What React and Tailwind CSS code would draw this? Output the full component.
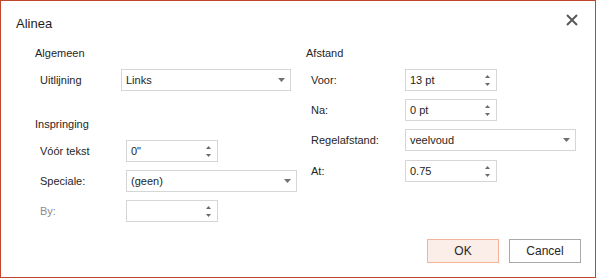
import React from 'react';

const font = { fontFamily: '"Liberation Sans", Arial, sans-serif' };

const Caret = () => (
  <svg width="7" height="4" viewBox="0 0 7 4" className="shrink-0">
    <path d="M0 0h7L3.5 4z" fill="#707070" />
  </svg>
);

const Spinner = () => (
  <div className="flex flex-col items-center gap-[5px] mr-[6px]">
    <svg width="5" height="3" viewBox="0 0 5 3">
      <path d="M2.5 0L5 3H0z" fill="#6a6a6a" />
    </svg>
    <svg width="5" height="3" viewBox="0 0 5 3">
      <path d="M0 0h5L2.5 3z" fill="#6a6a6a" />
    </svg>
  </div>
);

const SelectBox = ({ value, width }) => (
  <div className={`${width} h-[22px] border border-[#d6d6d6] bg-white flex items-center justify-between pl-[4px] pr-[5px] text-[11px] text-[#1e1e1e]`}>
    <span>{value}</span>
    <Caret />
  </div>
);

const SpinBox = ({ value }) => (
  <div className="w-[92px] h-[22px] border border-[#d6d6d6] bg-white flex items-center justify-between pl-[4px] text-[11px] text-[#1e1e1e]">
    <span>{value}</span>
    <Spinner />
  </div>
);

const Row = ({ label, labelWidth, disabled, children, className = '' }) => (
  <div className={`flex items-center pl-[5px] ${className}`}>
    <span className={`${labelWidth} text-[11px] ${disabled ? 'text-[#8c8c8c]' : 'text-[#262626]'}`}>{label}</span>
    {children}
  </div>
);

const Heading = ({ children, className = '' }) => (
  <div className={`h-[20px] flex items-center text-[11px] text-[#262626] ${className}`}>{children}</div>
);

export default function App() {
  return (
    <div style={font} className="w-[596px] h-[278px] border border-[#c1462b] bg-white flex flex-col">
      <div className="h-[42px] flex items-start justify-between pl-[15px] pr-[17px] pt-[14px]">
        <span className="text-[13px] leading-[18px] text-[#1e1e1e]">Alinea</span>
        <svg width="12" height="12" viewBox="0 0 12 12" className="-mt-[1px]">
          <path d="M1 1l10 10M11 1L1 11" stroke="#5a5a5a" strokeWidth="2" />
        </svg>
      </div>

      <div className="flex pl-[34px]">
        <div className="w-[271px] flex flex-col">
          <Heading>Algemeen</Heading>
          <Row label="Uitlijning" labelWidth="w-[81px]" className="mt-[6px]">
            <SelectBox value="Links" width="w-[170px]" />
          </Row>
          <Heading className="mt-[23px]">Inspringing</Heading>
          <Row label="Vóór tekst" labelWidth="w-[86px]" className="mt-[6px]">
            <SpinBox value={'0"'} />
          </Row>
          <Row label="Speciale:" labelWidth="w-[86px]" className="mt-[8px]">
            <SelectBox value="(geen)" width="w-[171px]" />
          </Row>
          <Row label="By:" labelWidth="w-[86px]" disabled className="mt-[8px]">
            <SpinBox value="" />
          </Row>
        </div>

        <div className="flex flex-col">
          <Heading>Afstand</Heading>
          <Row label="Voor:" labelWidth="w-[94px]" className="mt-[6px]">
            <SpinBox value="13 pt" />
          </Row>
          <Row label="Na:" labelWidth="w-[94px]" className="mt-[8px]">
            <SpinBox value="0 pt" />
          </Row>
          <Row label="Regelafstand:" labelWidth="w-[94px]" className="mt-[8px]">
            <SelectBox value="veelvoud" width="w-[171px]" />
          </Row>
          <Row label="At:" labelWidth="w-[94px]" className="mt-[9px]">
            <SpinBox value="0.75" />
          </Row>
        </div>
      </div>

      <div className="mt-auto flex justify-end gap-[10px] pr-[14px] pb-[14px]">
        <button className="w-[72px] h-[24px] border border-[#f3b49b] bg-[#fbede8] text-[12px] text-[#262626]">OK</button>
        <button className="w-[72px] h-[24px] border border-[#a9a9a9] bg-white text-[12px] text-[#262626]">Cancel</button>
      </div>
    </div>
  );
}
